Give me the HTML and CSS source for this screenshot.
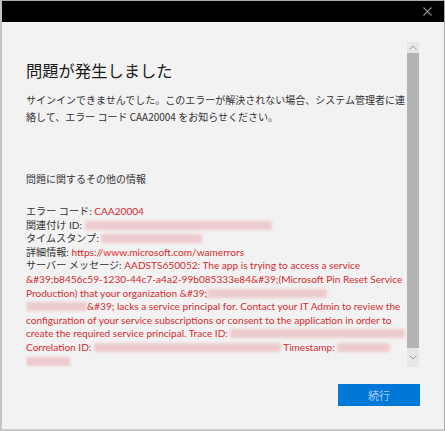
FILE: index.html
```html
<!DOCTYPE html>
<html lang="ja">
<head>
<meta charset="utf-8">
<link rel="stylesheet" href="styles.css">
</head>
<body>
<div class="window">
  <div class="titlebar">
    <svg class="close" width="9" height="9" viewBox="0 0 9 9"><path d="M0.5 0.5 L8.5 8.5 M8.5 0.5 L0.5 8.5" stroke="#8c8c8c" stroke-width="1.1" fill="none"/></svg>
  </div>
  <div class="content">
    <div class="scroll">
      <div class="main">
        <h1 class="title">問題が発生しました</h1>
        <p class="lead">サインインできませんでした。このエラーが解決されない場合、システム管理者に連<br>絡して、エラー コード CAA20004 をお知らせください。</p>
        <p class="section">問題に関するその他の情報</p>
        <div class="details">
          <div>エラー コード: <span class="red">CAA20004</span></div>
          <div>関連付け ID: <span class="blob b-corr"></span></div>
          <div>タイムスタンプ: <span class="blob b-time"></span></div>
          <div>詳細情報: <span class="red">https://www.microsoft.com/wamerrors</span></div>
          <div>サーバー メッセージ: <span class="red">AADSTS650052: The app is trying to access a service<br>&amp;#39;b8456c59-1230-44c7-a4a2-99b085333e84&amp;#39;(Microsoft Pin Reset Service<br>Production) that your organization &amp;#39;<span class="blob b-org"></span><br><span class="blob b-org2"></span>&amp;#39; lacks a service principal for. Contact your IT Admin to review the<br>configuration of your service subscriptions or consent to the application in order to<br>create the required service principal. Trace ID: <span class="blob b-trace"></span><br>Correlation ID: <span class="blob b-corr2"></span> Timestamp: <span class="blob b-ts"></span><br><span class="blob b-ts2"></span></span></div>
        </div>
      </div>
      <div class="scrollbar">
        <div class="arrow">
          <svg width="8" height="5" viewBox="0 0 8 5"><path d="M0.5 4.5 L4 1 L7.5 4.5" stroke="#9a9a9a" stroke-width="1" fill="none"/></svg>
        </div>
        <div class="thumb"></div>
        <div class="arrow">
          <svg width="8" height="5" viewBox="0 0 8 5"><path d="M0.5 0.5 L4 4 L7.5 0.5" stroke="#9a9a9a" stroke-width="1" fill="none"/></svg>
        </div>
      </div>
    </div>
    <div class="footer">
      <button class="btn">続行</button>
    </div>
  </div>
</div>
</body>
</html>
```
FILE: styles.css
```css
html, body {
  margin: 0;
  padding: 0;
  background: #f2f2f2;
}
.window {
  width: 445px;
  height: 431px;
  box-sizing: border-box;
  border: 1px solid #ababab;
  border-left: 2px solid #c4c4c4;
  border-bottom: 2px solid #c8c8c8;
  background: #f2f2f2;
  display: flex;
  flex-direction: column;
  font-family: "Noto Sans CJK JP", sans-serif;
  color: #333;
}
.titlebar {
  height: 21px;
  background: #000;
  display: flex;
  justify-content: flex-end;
  align-items: center;
  padding-right: 12px;
  flex: none;
}
.content {
  flex: 1;
  display: flex;
  flex-direction: column;
  padding: 20px 0 0 24px;
}
.scroll {
  display: flex;
  height: 325px;
}
.main {
  width: 381px;
  overflow: hidden;
}
.title {
  margin: 17px 0 0;
  font-size: 16.3px;
  font-weight: 400;
  line-height: 22px;
  color: #1a1a1a;
}
.lead {
  margin: 10px 0 0;
  font-size: 10px;
  line-height: 17px;
  color: #333;
  white-space: nowrap;
}
.section {
  margin: 47px 0 0;
  font-size: 10px;
  line-height: 14px;
  color: #333;
}
.details {
  margin-top: 19px;
  font-family: "Lato", "Noto Sans CJK JP", sans-serif;
  font-size: 10.1px;
  line-height: 13.6px;
  color: #333;
  white-space: nowrap;
}
.red {
  color: #d42a2f;
}
.blob {
  display: inline-block;
  height: 9px;
  vertical-align: -1px;
  background: rgba(226, 90, 100, 0.26);
  filter: blur(1.8px);
  border-radius: 2px;
}
.b-corr { width: 187px; }
.b-time { width: 101px; }
.b-org { width: 120px; }
.b-org2 { width: 61px; }
.b-trace { width: 175px; }
.b-corr2 { width: 187px; }
.b-ts { width: 53px; }
.b-ts2 { width: 44px; }
.scrollbar {
  width: 12px;
  display: flex;
  flex-direction: column;
}
.arrow {
  height: 11px;
  background: #e7e7e7;
  display: flex;
  align-items: center;
  justify-content: center;
  flex: none;
}
.arrow:last-child {
  height: 19px;
}
.thumb {
  flex: 1;
  background: #b4b4b4;
}
.footer {
  display: flex;
  justify-content: flex-end;
  padding-right: 24px;
  margin-top: 17px;
}
.btn {
  width: 82px;
  height: 22px;
  border: none;
  margin: 0;
  padding: 0;
  background: #0078d7;
  color: #a9c8ee;
  font-family: "Noto Sans CJK JP", sans-serif;
  font-size: 11px;
  line-height: 22px;
}
```
